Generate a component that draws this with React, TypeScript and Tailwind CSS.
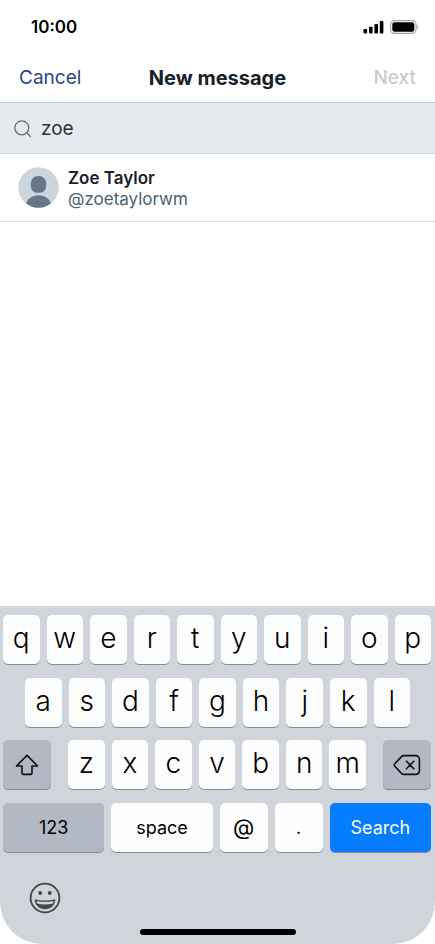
import { clsx } from 'clsx';
import type { ReactNode } from 'react';

const ROWS = ['qwertyuiop', 'asdfghjkl', 'zxcvbnm'].map((row) => row.split(''));

function StatusBar() {
  return (
    <div className="flex h-[53px] items-center justify-between pl-[31px] pr-4">
      <span className="text-[17px] font-semibold leading-5 text-black">10:00</span>
      <div className="flex items-center gap-[6px]">
        <svg width="21" height="14" viewBox="0 0 21 14" aria-hidden="true">
          <rect x="0.5" y="9" width="3.6" height="4.5" rx="1" />
          <rect x="6" y="6.8" width="3.6" height="6.7" rx="1" />
          <rect x="11.4" y="4" width="3.6" height="9.5" rx="1" />
          <rect x="16.8" y="1" width="3.6" height="12.5" rx="1" />
        </svg>
        <svg width="29" height="14" viewBox="0 0 29 14" aria-hidden="true">
          <rect x="0.6" y="0.6" width="25.4" height="12.8" rx="3.8" fill="none" stroke="#a3a3a3" strokeWidth="1.1" />
          <rect x="2.3" y="2.3" width="22" height="9.4" rx="2.2" />
          <path d="M27.2 4.6c1.3.6 1.3 4.2 0 4.8z" fill="#a3a3a3" />
        </svg>
      </div>
    </div>
  );
}

function Key({ children, label, className }: Readonly<{ children: ReactNode; label?: string; className?: string }>) {
  return (
    <button
      type="button"
      aria-label={label}
      className={clsx(
        'flex h-[49px] min-w-0 items-center justify-center rounded-[5px] shadow-[0_1px_0_#898b8f]',
        className,
      )}
    >
      {children}
    </button>
  );
}

function LetterKeys({ letters }: Readonly<{ letters: string[] }>) {
  return letters.map((letter) => (
    <Key key={letter} className="flex-1 bg-[#fdfdfd] pb-1 text-[28px] font-[350] leading-8 text-black">
      {letter}
    </Key>
  ));
}

function Keyboard() {
  return (
    <div className="rounded-b-[42px] bg-[#d0d4db] pt-[9px]">
      <div className="flex flex-col gap-[13px]">
        <div className="flex flex-col gap-[14px]">
          <div className="flex gap-[7px] pl-[3px] pr-1">
            <LetterKeys letters={ROWS[0]} />
          </div>
          <div className="flex gap-[7px] px-[25px]">
            <LetterKeys letters={ROWS[1]} />
          </div>
        </div>
        <div className="flex flex-col gap-[14px]">
          <div className="flex gap-[17px] pl-[3px] pr-1">
            <Key label="Shift" className="w-12 bg-[#b2b8c4]">
              <svg width="24" height="22" viewBox="0 0 24 22" fill="none" stroke="#111" strokeWidth="1.6" strokeLinejoin="round" aria-hidden="true">
                <path d="M12 1.4 22.6 12H17v7a1.4 1.4 0 0 1-1.4 1.4H8.4A1.4 1.4 0 0 1 7 19v-7H1.4z" />
              </svg>
            </Key>
            <div className="flex flex-1 gap-[7px]">
              <LetterKeys letters={ROWS[2]} />
            </div>
            <Key label="Delete" className="w-12 bg-[#b2b8c4]">
              <svg width="28" height="22" viewBox="0 0 28 22" fill="none" stroke="#111" strokeWidth="1.6" strokeLinecap="round" strokeLinejoin="round" aria-hidden="true">
                <path d="M10.6 1.6h12.2a3.6 3.6 0 0 1 3.6 3.6v11.6a3.6 3.6 0 0 1-3.6 3.6H10.6a2.6 2.6 0 0 1-1.9-.8L1.8 12.2a1.6 1.6 0 0 1 0-2.4l6.9-7.4a2.6 2.6 0 0 1 1.9-.8z" />
                <path d="m13.4 7.2 7.4 7.6M20.8 7.2l-7.4 7.6" />
              </svg>
            </Key>
          </div>
          <div className="flex gap-[7px] pl-[3px] pr-1 text-lg text-black">
            <Key className="flex-1 bg-[#b2b8c4]">123</Key>
            <Key className="flex-1 bg-[#fdfdfd]">space</Key>
            <Key className="w-12 bg-[#fdfdfd] text-[22px]">@</Key>
            <Key className="w-12 bg-[#fdfdfd]">.</Key>
            <Key className="flex-1 bg-[#067cff] text-white">Search</Key>
          </div>
        </div>
      </div>
      <div className="px-[29px] pt-[30px]">
        <button type="button" aria-label="Emoji" className="block">
          <svg width="32" height="32" viewBox="0 0 32 32" aria-hidden="true">
            <circle cx="16" cy="16" r="14.4" fill="none" stroke="#43464b" strokeWidth="1.8" />
            <ellipse cx="11.2" cy="11" rx="1.9" ry="2.1" fill="#43464b" />
            <ellipse cx="20.8" cy="11" rx="1.9" ry="2.1" fill="#43464b" />
            <path d="M5.6 17.2c6.600 1.700 14.200 1.700 20.800 0C26 23.400 21.600 27.200 16 27.200S6 23.400 5.600 17.200z" fill="#43464b" />
            <path d="M7.400 18.900c5.600 1.200 11.600 1.200 17.200 0-.2 1.100-.6 2-1.200 2.800-4.700 1-10.100 1-14.800 0-.6-.8-1-1.700-1.200-2.800z" fill="#d0d4db" />
          </svg>
        </button>
      </div>
      <div className="flex justify-center pb-[9px] pt-[15px]">
        <div className="h-[6px] w-[156px] rounded-full bg-black" />
      </div>
    </div>
  );
}

export default function App() {
  return (
    <main className="flex min-h-screen flex-col bg-white font-['Inter',sans-serif]">
      <StatusBar />
      <header className="grid h-[50px] grid-cols-[1fr_auto_1fr] items-center border-b border-[#bcc5cd] px-[19px] text-[19px] leading-6">
        <button type="button" className="justify-self-start text-[#2c4583]">Cancel</button>
        <h1 className="text-[20px] font-bold text-[#17212b]">New message</h1>
        <button type="button" disabled className="justify-self-end font-medium text-[#cbcbcb]">Next</button>
      </header>
      <label className="flex h-[51px] items-center gap-[9px] border-b border-[#d0d7dc] bg-[#e5eaee] pl-[14px] pr-4 pt-[2px]">
        <svg width="18" height="18" viewBox="0 0 18 18" fill="none" stroke="#5f6f7d" strokeWidth="1.3" strokeLinecap="round" aria-hidden="true">
          <circle cx="7.800" cy="7.800" r="7" />
          <path d="m12.900 12.900 3.600 3.600" />
        </svg>
        <input
          type="text"
          aria-label="Search people"
          defaultValue="zoe"
          className="min-w-0 flex-1 bg-transparent text-[19px] leading-6 text-[#26313b] outline-none"
        />
      </label>
      <a href="#zoetaylorwm" className="flex h-17 items-center gap-[9px] border-b border-[#dcdfe2] px-[18px]">
        <svg width="41" height="41" viewBox="0 0 41 41" aria-hidden="true">
          <defs>
            <clipPath id="avatar">
              <circle cx="20.500" cy="20.500" r="20.200" />
            </clipPath>
          </defs>
          <g clipPath="url(#avatar)">
            <rect width="41" height="41" fill="#cbd5dd" />
            <path d="M20.500 9c4.700 0 7.700 3.400 7.700 8 0 5.400-1.600 8.800-7.700 8.800s-7.700-3.400-7.700-8.800c0-4.600 3-8 7.700-8z" fill="#667888" />
            <path d="M6.500 41c1.500-8.800 7.500-12.700 14-12.700s12.500 3.900 14 12.700z" fill="#667888" />
          </g>
        </svg>
        <div className="flex flex-col pt-[2px] text-[17px] leading-[21px]">
          <span className="font-semibold text-[#17212b]">Zoe Taylor</span>
          <span className="text-[#4d5f70]">@zoetaylorwm</span>
        </div>
      </a>
      <div className="flex-1" />
      <Keyboard />
    </main>
  );
}
